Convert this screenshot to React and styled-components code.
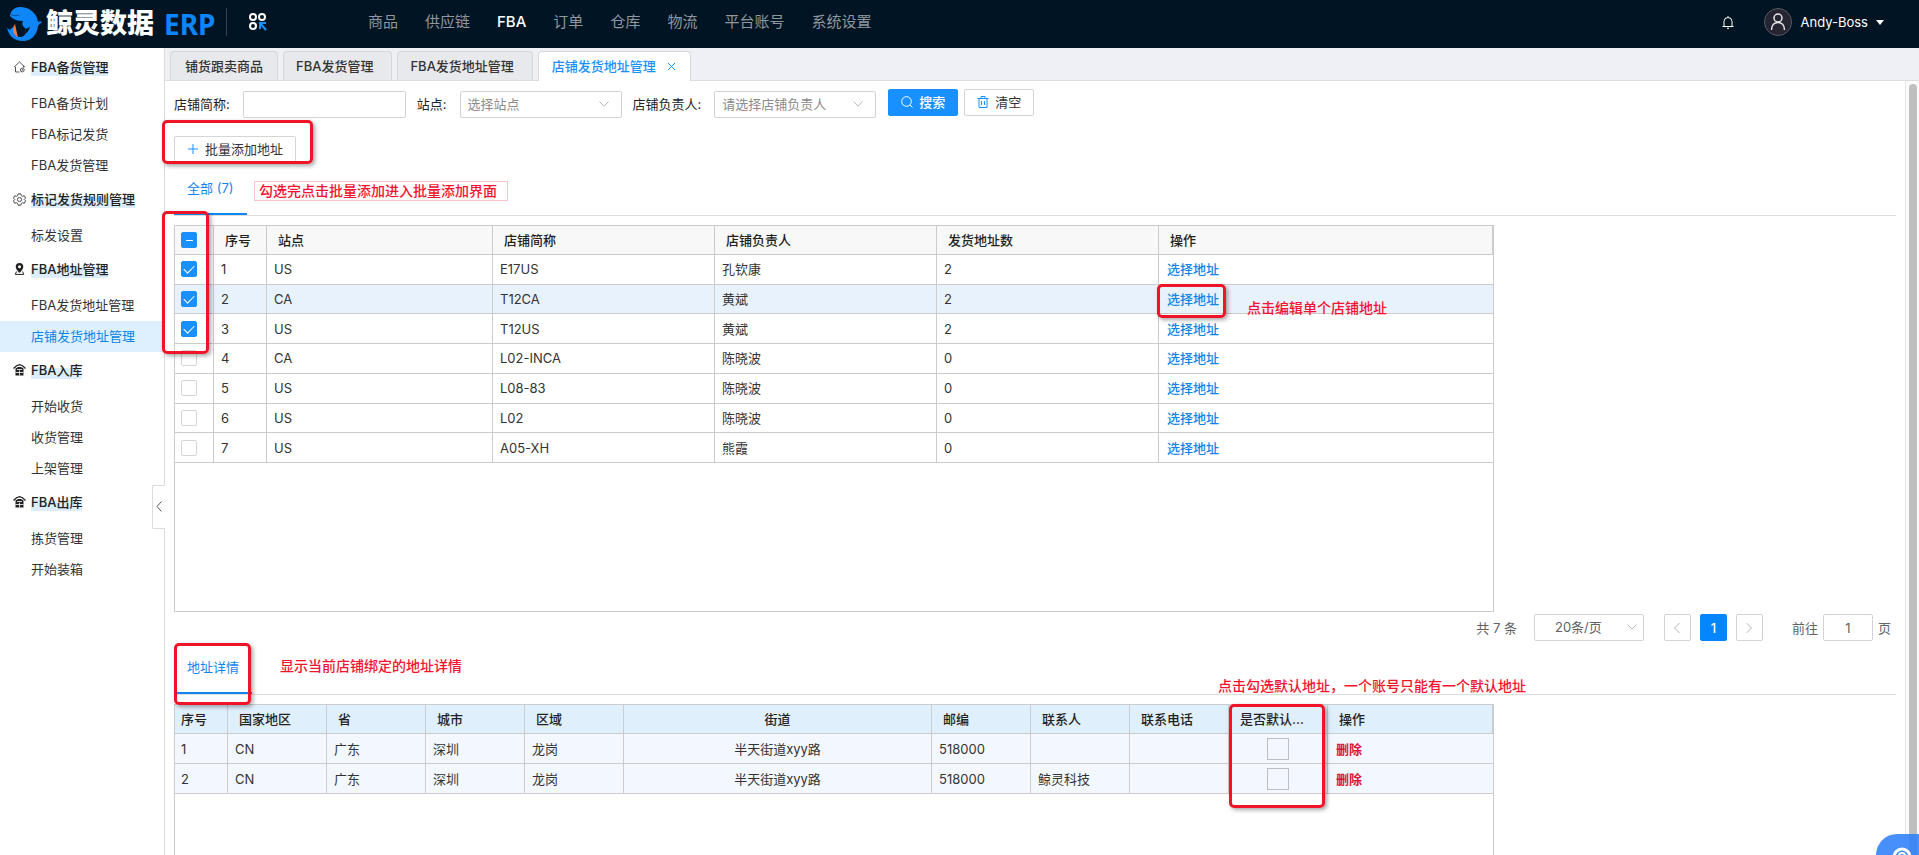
import { Fragment } from 'react';
import styled, { createGlobalStyle, css } from 'styled-components';

const GlobalStyle = createGlobalStyle`
  * {
    box-sizing: border-box;
  }
  body {
    margin: 0;
    overflow: hidden;
    background: #fff;
    color: #333;
    font-family: Inter, 'Noto Sans CJK SC', sans-serif;
    font-size: 13px;
    line-height: 18px;
  }
  button,
  input,
  select {
    font: inherit;
    color: inherit;
  }
  a {
    color: inherit;
    text-decoration: none;
  }
`;

const Page = styled.div`
  display: flex;
  flex-direction: column;
  height: 100vh;
`;

const Header = styled.header`
  display: flex;
  align-items: center;
  flex: none;
  height: 48px;
  padding: 0 35px 4px 6px;
  background: #001423;
  color: #fff;
`;

const Brand = styled.a`
  display: flex;
  align-items: center;
  width: 221px;
  height: 28px;
  padding-top: 3px;
  border-right: 1px solid #33434f;
  font-size: 27px;
  font-weight: 900;
  line-height: 28px;
  white-space: nowrap;
  > svg {
    flex: none;
    margin-right: 4px;
  }
`;

const BrandSuffix = styled.span`
  margin-left: 10px;
  color: #0d85fd;
  font-family: 'Noto Sans', sans-serif;
  font-size: 28px;
  font-weight: 700;
`;

const AppsButton = styled.button`
  display: flex;
  margin-left: 22px;
  padding: 0;
  border: 0;
  background: none;
`;

const Nav = styled.nav`
  display: flex;
  flex: 1;
  gap: 27px;
  margin-left: 101px;
  font-size: 15px;
`;

const NavLink = styled.a`
  color: ${({ $active }) => ($active ? '#fff' : '#8f989f')};
  font-weight: ${({ $active }) => ($active ? 500 : 400)};
`;

const UserArea = styled.div`
  display: flex;
  align-items: center;
`;

const Avatar = styled.span`
  display: flex;
  align-items: center;
  justify-content: center;
  width: 28px;
  height: 28px;
  margin: 0 9px 0 30px;
  border: 1px solid #555a66;
  border-radius: 50%;
  background: #262431;
`;

const Caret = styled.span`
  margin-left: 8px;
  border: 4px solid transparent;
  border-top: 5px solid #fff;
  border-bottom: 0;
`;

const Body = styled.div`
  display: flex;
  flex: 1;
  min-height: 0;
`;

const Sidebar = styled.aside`
  position: relative;
  flex: none;
  width: 165px;
  padding-top: 1px;
  border-right: 1px solid #dcdcdc;
`;

const GroupTitle = styled.div`
  display: flex;
  align-items: center;
  height: 39px;
  padding: 0 0 3px 13px;
  color: #222;
  font-weight: 500;
  > svg {
    flex: none;
    margin-right: 5px;
  }
  > span {
    background: linear-gradient(transparent 40%, #dceefd 40%);
  }
`;

const MenuItem = styled.a`
  display: block;
  padding-left: 31px;
  line-height: 31px;
  ${({ $active }) =>
    $active &&
    css`
      background: #def0fd;
      color: #0a84e8;
    `}
`;

const CollapseButton = styled.button`
  position: absolute;
  right: -1px;
  top: 437px;
  display: flex;
  align-items: center;
  justify-content: center;
  width: 13px;
  height: 44px;
  padding: 0 0 2px;
  border: 1px solid #dcdcdc;
  border-right: 0;
  border-radius: 2px 0 0 2px;
  background: #fff;
`;

const Workspace = styled.div`
  display: flex;
  flex: 1;
  flex-direction: column;
  min-width: 0;
`;

const PageTabs = styled.div`
  display: flex;
  align-items: flex-end;
  flex: none;
  gap: 5px;
  height: 33px;
  padding-left: 5px;
  border-bottom: 1px solid #dcdde1;
  background: #eff0f5;
`;

const PageTab = styled.a`
  display: flex;
  align-items: center;
  height: 29px;
  padding: ${({ $wide }) => ($wide ? '0 18px 0 12px' : '0 14px')};
  border: 1px solid #d5d6da;
  border-bottom: 0;
  border-radius: 4px 4px 0 0;
  background: #e8e9ed;
  font-weight: 500;
  ${({ $active }) =>
    $active &&
    css`
      height: 30px;
      margin-bottom: -1px;
      padding: 0 14px 2px 13px;
      background: #fff;
      color: #1890ff;
    `}
`;

const TabClose = styled.button`
  display: flex;
  margin: 2px 0 0 11px;
  padding: 0;
  border: 0;
  background: none;
`;

const Scroller = styled.div`
  display: flex;
  flex: 1;
  min-height: 0;
`;

const Content = styled.main`
  display: flex;
  flex: 1;
  flex-direction: column;
  min-width: 0;
  padding: 8px 9px 0;
`;

const ScrollTrack = styled.div`
  flex: none;
  width: 14px;
  padding: 3px 2px 0 3px;
  border-left: 1px solid #e4e4e4;
  background: #fafafa;
`;

const ScrollThumb = styled.div`
  height: 100%;
  border-radius: 4px 4px 0 0;
  background: #bfbfbf;
`;

const Filters = styled.form`
  display: flex;
  align-items: flex-start;
`;

const Field = styled.div`
  display: flex;
  align-items: center;
  margin: 2px 11px 0 0;
  > label {
    margin-right: 13px;
    padding-bottom: 2px;
    color: #222;
  }
`;

const inputBox = css`
  height: 27px;
  border: 1px solid #d2d3d6;
  border-radius: 2px;
  background: #fff;
  outline: 0;
`;

const TextInput = styled.input`
  ${inputBox}
  width: ${({ $width }) => $width}px;
  text-align: center;
`;

const SelectWrap = styled.div`
  position: relative;
  display: flex;
  width: ${({ $width }) => $width}px;
  > svg {
    position: absolute;
    right: ${({ $width }) => ($width > 120 ? 13 : 7)}px;
    top: 10px;
    pointer-events: none;
  }
`;

const Select = styled.select`
  ${inputBox}
  width: 100%;
  padding: 0 24px 1px ${({ $indent }) => $indent || 7}px;
  color: ${({ $indent }) => ($indent ? '#606266' : '#8b8b8b')};
  appearance: none;
`;

const Button = styled.button`
  display: inline-flex;
  align-items: center;
  justify-content: center;
  gap: 6px;
  height: 27px;
  padding: 0 12px 2px;
  border: 1px solid ${({ $primary }) => ($primary ? '#1890ff' : '#d4d5d8')};
  border-radius: 2px;
  background: ${({ $primary }) => ($primary ? '#1890ff' : '#fff')};
  color: ${({ $primary }) => ($primary ? '#fff' : '#333')};
  font-weight: ${({ $primary }) => ($primary ? 500 : 400)};
  > svg {
    flex: none;
  }
`;

const FilterActions = styled.div`
  display: flex;
  gap: 6px;
  margin-left: 1px;
`;

const Toolbar = styled.div`
  position: relative;
  margin-top: 18px;
  height: 27px;
`;

const SectionTabs = styled.div`
  position: relative;
  display: flex;
  flex: none;
  border-bottom: 1px solid #dedede;
`;

const SectionTab = styled.a`
  padding: 0 13px;
  border-bottom: 2px solid #1086f0;
  color: #1086f0;
  line-height: 50px;
`;

const TablePanel = styled.div`
  position: relative;
  flex: ${({ $fill }) => ($fill ? '1' : 'none')};
  width: 100%;
  max-width: 1320px;
  min-height: ${({ $fill }) => ($fill ? 0 : 387)}px;
  margin-top: 9px;
  border: 1px solid #ccc;
  ${({ $fill }) => $fill && 'border-bottom: 0;'}
`;

const Table = styled.table`
  width: 100%;
  height: ${({ $height }) => $height}px;
  border-collapse: separate;
  border-spacing: 0;
  table-layout: fixed;
`;

const Th = styled.th`
  height: 29px;
  padding: 0 ${({ $tight }) => ($tight ? 6 : 11)}px;
  border-right: 1px solid #ccc;
  border-bottom: 1px solid #ccc;
  background: ${({ $blue }) => ($blue ? '#e0effc' : '#f8f8f8')};
  color: #222;
  font-weight: 500;
  text-align: ${({ $center }) => ($center ? 'center' : 'left')};
  white-space: nowrap;
`;

const Td = styled.td`
  padding: 0 7px;
  border-right: 1px solid #ccc;
  border-bottom: 1px solid #ccc;
  text-align: ${({ $center }) => ($center ? 'center' : 'left')};
  &:first-child {
    padding-left: 6px;
  }
  &:last-child {
    padding-left: 8px;
    border-right: 0;
  }
`;

const Tr = styled.tr`
  background: ${({ $tone }) => $tone || '#fff'};
`;

const Checkbox = styled.input`
  display: block;
  width: ${({ $size }) => $size || 16}px;
  height: ${({ $size }) => $size || 16}px;
  margin: ${({ $size }) => ($size ? '0 auto' : '0')};
  border: 1px solid ${({ $size }) => ($size ? '#bbbec4' : '#d6d6d6')};
  border-radius: ${({ $size }) => ($size ? 0 : 2)}px;
  background: ${({ $size }) => ($size ? 'transparent' : '#fff')};
  appearance: none;
  &:checked,
  &:indeterminate {
    display: flex;
    align-items: center;
    justify-content: center;
    border-color: #1890ff;
    background: #1890ff;
  }
  &:checked::before {
    content: '';
    width: 5px;
    height: 9px;
    margin-bottom: 2px;
    border: solid #fff;
    border-width: 0 1px 1px 0;
    transform: rotate(45deg);
  }
  &:indeterminate::before {
    content: '';
    width: 7px;
    height: 1px;
    background: #fff;
  }
`;

const RowAction = styled.a`
  color: ${({ $danger }) => ($danger ? '#dd1533' : '#0d84e8')};
  font-weight: ${({ $danger }) => ($danger ? 700 : 500)};
`;

const Pagination = styled.div`
  display: flex;
  align-items: center;
  justify-content: flex-end;
  flex: none;
  height: 27px;
  margin: 2px 0 1px;
  padding-right: 5px;
  color: #606266;
`;

const PageButtons = styled.div`
  display: flex;
  gap: 9px;
  margin: 0 29px 0 20px;
`;

const PageButton = styled.button`
  display: flex;
  align-items: center;
  justify-content: center;
  width: 27px;
  height: 27px;
  padding: 0;
  border: 1px solid ${({ $active }) => ($active ? '#0586ff' : '#d2d3d6')};
  border-radius: 2px;
  background: ${({ $active }) => ($active ? '#0586ff' : '#fff')};
  color: ${({ $active }) => ($active ? '#fff' : '#aaa')};
  font-weight: 500;
`;

const PageSize = styled.div`
  margin-left: 17px;
`;

const Jumper = styled.label`
  display: flex;
  align-items: center;
  gap: 5px;
`;

// Red guide marks laid over the page
const Mark = styled.div`
  position: absolute;
  left: ${({ $x }) => $x}px;
  top: ${({ $y }) => $y}px;
  width: ${({ $w }) => $w}px;
  height: ${({ $h }) => $h}px;
  border: 3px solid #f01428;
  border-radius: 5px;
  box-shadow: 2px 2px 4px rgba(0, 0, 0, 0.35);
  pointer-events: none;
  z-index: 2;
`;

const Note = styled.div`
  position: absolute;
  left: ${({ $x }) => $x}px;
  top: ${({ $y }) => $y}px;
  padding: 0 ${({ $boxed }) => ($boxed ? 10 : 4)}px 0 4px;
  border: 1px solid ${({ $boxed }) => ($boxed ? '#fbc4cb' : 'transparent')};
  color: #f5142e;
  font-size: 14px;
  font-weight: 500;
  white-space: nowrap;
  z-index: 2;
`;

const HelpButton = styled.button`
  position: fixed;
  right: 0;
  bottom: 0;
  display: flex;
  justify-content: center;
  width: 43px;
  height: 21px;
  padding: 13px 0 0 8px;
  border: 0;
  border-radius: 21px 0 0 0;
  background: rgba(46, 127, 250, 0.88);
  overflow: hidden;
  z-index: 3;
`;

const Whale = () => (
  <svg width="36" height="36" viewBox="0 0 36 36" aria-hidden="true">
    <path
      d="M4 10C4 6 8 1 14 1c9 0 17 6 18 15 1-1 3-1 4 0-1 1-3 2-4 4-1 9-7 15-15 15C8 35 3 30 1 22c1 1 2 1 3 2 1-2 3-3 4-2 0 5 2 9 6 9 5 0 8-5 4-10-2-1-2-4-1-6-4 0-10-1-13-5Z"
      fill="#0f86f8"
    />
    <path d="M4 8c3 2 7 2 9 1" fill="none" stroke="#0a4f96" />
    <path d="M19 22c2 1 4 0 5-2-1 5-3 7-5 8 1-2 1-4 0-6Z" fill="#001423" />
    <path d="M9 18c-3 4-3 10 3 13-1-4-2-8-3-13Z" fill="#ee7d43" />
  </svg>
);

const AppsIcon = () => (
  <svg width="18" height="18" viewBox="0 0 18 18" fill="none" strokeWidth="2" aria-hidden="true">
    <g stroke="#fff">
      <circle cx="4" cy="4" r="3" />
      <circle cx="13" cy="4" r="3" />
      <circle cx="4" cy="13" r="3" />
    </g>
    <path d="M17 10h-6v6M11 10l6 7" stroke="#1890ff" />
  </svg>
);

const BellIcon = () => (
  <svg width="12" height="13" viewBox="0 0 12 13" fill="none" stroke="#fff" aria-hidden="true">
    <path d="M.5 10.500h11M2 10V5.500a4 4 0 0 1 8 0V10M6 .2v1.300M5 12.300h2" />
  </svg>
);

const SearchIcon = () => (
  <svg width="12" height="12" viewBox="0 0 12 12" fill="none" stroke="#fff" aria-hidden="true">
    <circle cx="5.500" cy="5.500" r="4.800" />
    <path d="m9 9 2.500 2.500" />
  </svg>
);

const TrashIcon = () => (
  <svg width="12" height="12" viewBox="0 0 12 12" fill="none" stroke="#1890ff" aria-hidden="true">
    <path d="M.5 2.500h11M4 2.500v-2h4v2M2 2.500v9h8v-9M4.500 5v4M7.500 5v4" />
  </svg>
);

const HomeIcon = () => (
  <svg width="13" height="12" viewBox="0 0 12 12" fill="none" stroke="#555" aria-hidden="true">
    <path d="M2 6v5h4M.5 6.200 6 1l5.500 5.200M10 5v1.500" />
    <circle cx="8.800" cy="9" r="1.900" />
    <circle cx="8.800" cy="9" r=".4" />
  </svg>
);

const GearIcon = () => (
  <svg width="13" height="13" viewBox="0 0 24 24" fill="none" stroke="#444" strokeWidth="1.800" aria-hidden="true">
    <path d="M9.500 1.500h5l.8 3.300 2.200 1.300 3.300-1 2.400 4.300-2.500 2.600 2.500 2.600-2.400 4.300-3.300-1-2.200 1.300-.8 3.300h-5l-.8-3.300-2.200-1.300-3.300 1L.8 14.600 3.300 12 .8 9.400l2.400-4.300 3.300 1 2.200-1.300z" />
    <circle cx="12" cy="12" r="3.800" />
  </svg>
);

const PinIcon = () => (
  <svg width="13" height="12" viewBox="0 0 12 12" aria-hidden="true">
    <path d="M6 0a3.800 3.800 0 0 0-3.800 3.800C2.200 6.500 6 10 6 10s3.800-3.500 3.800-6.200A3.800 3.800 0 0 0 6 0Zm0 5.200a1.500 1.500 0 1 1 0-3 1.500 1.500 0 0 1 0 3Z" fill="#222" />
    <path d="M3 8.500 1.800 11.400h8.400L9 8.500" fill="none" stroke="#222" />
  </svg>
);

const WarehouseIcon = () => (
  <svg width="13" height="12" viewBox="0 0 13 12" aria-hidden="true">
    <path d="M.5 4.500 3.500 1.700 6.500.7l3 1 3 2.800" fill="none" stroke="#222" strokeWidth="1.300" />
    <path d="M2.500 4.500 5 3h3l2.500 1.500v7h-8z" fill="#222" />
    <path d="M4 5.500h5M2.500 8.500h8M6.500 6.500v5" stroke="#fff" strokeWidth=".8" />
  </svg>
);

const Chevron = ({ d, width = 10, height = 6, color = '#b4b7bd' }) => (
  <svg width={width} height={height} viewBox={`0 0 ${width} ${height}`} fill="none" stroke={color} aria-hidden="true">
    <path d={d} />
  </svg>
);

const DOWN = 'M.5 .5 5 5.200 9.500 .5';

const navItems = ['商品', '供应链', 'FBA', '订单', '仓库', '物流', '平台账号', '系统设置'];

const menu = [
  { title: 'FBA备货管理', Icon: HomeIcon, items: ['FBA备货计划', 'FBA标记发货', 'FBA发货管理'] },
  { title: '标记发货规则管理', Icon: GearIcon, items: ['标发设置'] },
  { title: 'FBA地址管理', Icon: PinIcon, items: ['FBA发货地址管理', '店铺发货地址管理'] },
  { title: 'FBA入库', Icon: WarehouseIcon, items: ['开始收货', '收货管理', '上架管理'] },
  { title: 'FBA出库', Icon: WarehouseIcon, items: ['拣货管理', '开始装箱'] },
];

const shops = [
  { site: 'US', name: 'E17US', owner: '孔钦康', count: 2, checked: true },
  { site: 'CA', name: 'T12CA', owner: '黄斌', count: 2, checked: true, current: true },
  { site: 'US', name: 'T12US', owner: '黄斌', count: 2, checked: true },
  { site: 'CA', name: 'L02-INCA', owner: '陈晓波', count: 0 },
  { site: 'US', name: 'L08-83', owner: '陈晓波', count: 0 },
  { site: 'US', name: 'L02', owner: '陈晓波', count: 0 },
  { site: 'US', name: 'A05-XH', owner: '熊霞', count: 0 },
];

const addresses = [
  { contact: '', phone: '' },
  { contact: '鲸灵科技', phone: '' },
];

const shopCols = [39, 53, 226, 222, 222, 222];
const addressCols = [53, 99, 99, 99, 99, 308, 99, 99, 99, 99];

const Cols = ({ widths }) => (
  <colgroup>
    {widths.map((width, i) => (
      <col key={i} width={width} />
    ))}
    <col />
  </colgroup>
);

const ShopTable = () => (
  <Table $height={237}>
    <Cols widths={shopCols} />
    <thead>
      <tr>
        <Th $tight>
          <Checkbox
            type="checkbox"
            aria-label="全选"
            ref={(el) => {
              if (el) el.indeterminate = true;
            }}
          />
        </Th>
        {['序号', '站点', '店铺简称', '店铺负责人', '发货地址数', '操作'].map((text) => (
          <Th key={text}>{text}</Th>
        ))}
      </tr>
    </thead>
    <tbody>
      {shops.map((shop, i) => (
        <Tr key={shop.name} $tone={shop.current && '#e8f2fd'}>
          <Td>
            <Checkbox type="checkbox" aria-label={shop.name} defaultChecked={shop.checked} />
          </Td>
          <Td>{i + 1}</Td>
          <Td>{shop.site}</Td>
          <Td>{shop.name}</Td>
          <Td>{shop.owner}</Td>
          <Td>{shop.count}</Td>
          <Td>
            <RowAction href="#">选择地址</RowAction>
          </Td>
        </Tr>
      ))}
    </tbody>
  </Table>
);

const AddressTable = () => (
  <Table $height={89}>
    <Cols widths={addressCols} />
    <thead>
      <tr>
        <Th $blue $tight>序号</Th>
        <Th $blue>国家地区</Th>
        <Th $blue>省</Th>
        <Th $blue>城市</Th>
        <Th $blue>区域</Th>
        <Th $blue $center>街道</Th>
        <Th $blue>邮编</Th>
        <Th $blue>联系人</Th>
        <Th $blue>联系电话</Th>
        <Th $blue>是否默认...</Th>
        <Th $blue>操作</Th>
      </tr>
    </thead>
    <tbody>
      {addresses.map((row, i) => (
        <Tr key={i} $tone="#f3f8ff">
          <Td>{i + 1}</Td>
          <Td>CN</Td>
          <Td>广东</Td>
          <Td>深圳</Td>
          <Td>龙岗</Td>
          <Td $center>半天街道xyy路</Td>
          <Td>518000</Td>
          <Td>{row.contact}</Td>
          <Td>{row.phone}</Td>
          <Td>
            <Checkbox type="checkbox" $size={22} aria-label="是否默认" />
          </Td>
          <Td>
            <RowAction href="#" $danger>删除</RowAction>
          </Td>
        </Tr>
      ))}
    </tbody>
  </Table>
);

const App = () => {
  return (
    <Page>
      <GlobalStyle />
      <Header>
        <Brand href="#">
          <Whale />
          鲸灵数据
          <BrandSuffix>ERP</BrandSuffix>
        </Brand>
        <AppsButton aria-label="应用">
          <AppsIcon />
        </AppsButton>
        <Nav>
          {navItems.map((item) => (
            <NavLink key={item} href="#" $active={item === 'FBA'}>
              {item}
            </NavLink>
          ))}
        </Nav>
        <UserArea>
          <BellIcon />
          <Avatar>
            <svg width="16" height="18" viewBox="0 0 16 18" fill="none" stroke="#e6e6ea" strokeWidth="1.500" aria-hidden="true">
              <circle cx="8" cy="5" r="4" />
              <path d="M1.500 17c0-5 3-7.500 6.500-7.500s6.500 2.500 6.500 7.500" />
            </svg>
          </Avatar>
          Andy-Boss
          <Caret />
        </UserArea>
      </Header>
      <Body>
        <Sidebar>
          {menu.map(({ title, Icon, items }) => (
            <Fragment key={title}>
              <GroupTitle>
                <Icon />
                <span>{title}</span>
              </GroupTitle>
              {items.map((item) => (
                <MenuItem key={item} href="#" $active={item === '店铺发货地址管理'}>
                  {item}
                </MenuItem>
              ))}
            </Fragment>
          ))}
          <CollapseButton aria-label="收起菜单">
            <Chevron d="M5.500 .5 1 5.500 5.500 10.500" width={6} height={11} color="#555" />
          </CollapseButton>
        </Sidebar>
        <Workspace>
          <PageTabs>
            <PageTab href="#">铺货跟卖商品</PageTab>
            <PageTab href="#" $wide>FBA发货管理</PageTab>
            <PageTab href="#" $wide>FBA发货地址管理</PageTab>
            <PageTab as="div" $active>
              店铺发货地址管理
              <TabClose aria-label="关闭">
                <Chevron d="M1 1l7 7M8 1l-7 7" width={9} height={9} color="#1890ff" />
              </TabClose>
            </PageTab>
          </PageTabs>
          <Scroller>
            <Content>
              <Filters onSubmit={(e) => e.preventDefault()}>
                <Field>
                  <label htmlFor="shop">店铺简称:</label>
                  <TextInput id="shop" type="text" $width={163} />
                </Field>
                <Field>
                  <label htmlFor="site">站点:</label>
                  <SelectWrap $width={162}>
                    <Select id="site">
                      <option>选择站点</option>
                    </Select>
                    <Chevron d={DOWN} />
                  </SelectWrap>
                </Field>
                <Field>
                  <label htmlFor="owner">店铺负责人:</label>
                  <SelectWrap $width={162}>
                    <Select id="owner">
                      <option>请选择店铺负责人</option>
                    </Select>
                    <Chevron d={DOWN} />
                  </SelectWrap>
                </Field>
                <FilterActions>
                  <Button $primary type="submit">
                    <SearchIcon />
                    搜索
                  </Button>
                  <Button type="button">
                    <TrashIcon />
                    清空
                  </Button>
                </FilterActions>
              </Filters>
              <Toolbar>
                <Button type="button">
                  <Chevron d="M6 1v10M1 6h10" width={12} height={12} color="#1890ff" />
                  批量添加地址
                </Button>
                <Mark $x={-12} $y={-16} $w={151} $h={44} />
              </Toolbar>
              <SectionTabs>
                <SectionTab href="#">全部 (7)</SectionTab>
                <Note $x={80} $y={18} $boxed>
                  勾选完点击批量添加进入批量添加界面
                </Note>
              </SectionTabs>
              <TablePanel>
                <ShopTable />
                <Mark $x={-13} $y={-15} $w={47} $h={143} />
                <Mark $x={982} $y={58} $w={69} $h={34} />
                <Note $x={1067} $y={72}>点击编辑单个店铺地址</Note>
              </TablePanel>
              <Pagination>
                共 7 条
                <PageSize>
                  <SelectWrap $width={110}>
                    <Select $indent={20} aria-label="每页条数">
                      <option>20条/页</option>
                    </Select>
                    <Chevron d={DOWN} />
                  </SelectWrap>
                </PageSize>
                <PageButtons>
                  <PageButton aria-label="上一页">
                    <Chevron d="M6.500 1 1.500 6 6.500 11" width={8} height={12} />
                  </PageButton>
                  <PageButton $active>1</PageButton>
                  <PageButton aria-label="下一页">
                    <Chevron d="M1.500 1 6.500 6 1.500 11" width={8} height={12} />
                  </PageButton>
                </PageButtons>
                <Jumper>
                  前往
                  <TextInput type="text" defaultValue="1" $width={50} />
                  页
                </Jumper>
              </Pagination>
              <SectionTabs>
                <SectionTab href="#">地址详情</SectionTab>
                <Mark $x={0} $y={1} $w={77} $h={62} />
                <Note $x={101} $y={14}>显示当前店铺绑定的地址详情</Note>
                <Note $x={1039} $y={34}>点击勾选默认地址，一个账号只能有一个默认地址</Note>
              </SectionTabs>
              <TablePanel $fill>
                <AddressTable />
                <Mark $x={1054} $y={-1} $w={96} $h={104} />
              </TablePanel>
            </Content>
            <ScrollTrack>
              <ScrollThumb />
            </ScrollTrack>
          </Scroller>
        </Workspace>
      </Body>
      <HelpButton aria-label="帮助">
        <svg width="20" height="20" viewBox="0 0 20 20" fill="none" stroke="#fff" strokeWidth="3" aria-hidden="true">
          <circle cx="10" cy="10" r="8" />
          <path d="M7 9a3 3 0 0 1 6 0c0 2-3 2-3 4" strokeWidth="2" />
        </svg>
      </HelpButton>
    </Page>
  );
};

export default App;
